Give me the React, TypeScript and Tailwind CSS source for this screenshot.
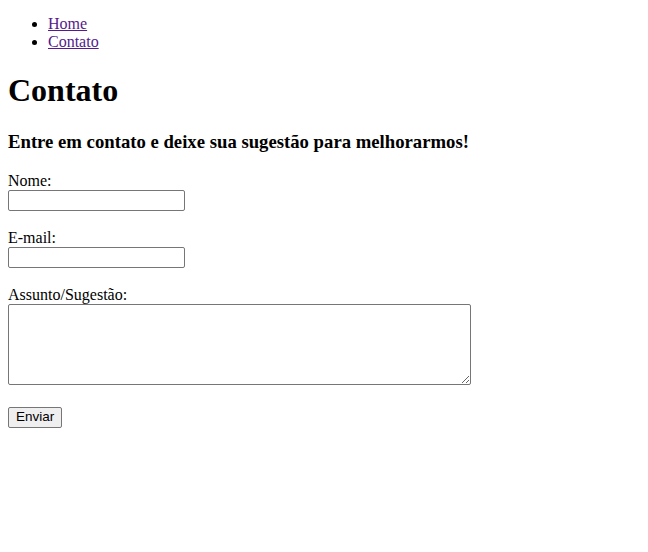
const App = () => {
  const field = 'block w-[177px] h-[21px] border border-[#767676] rounded-[2px] bg-white px-[2px] text-[13.33px]'

  return (
    <div className="min-h-screen bg-white p-2 text-base text-black leading-[normal] font-['Liberation_Serif','Times_New_Roman',serif]">
      <ul className="mt-[7px] mb-4 list-disc pl-10">
        <li>
          <a href="#" className="text-[#551a8b] underline">Home</a>
        </li>
        <li>
          <a href="#" className="text-[#551a8b] underline">Contato</a>
        </li>
      </ul>

      <h1 className="my-[21.44px] text-[32px] font-bold">Contato</h1>
      <h3 className="my-[18.72px] text-[18.72px] font-bold">
        Entre em contato e deixe sua sugestão para melhorarmos!
      </h3>

      <form onSubmit={(e) => e.preventDefault()}>
        <label htmlFor="nome" className="block">Nome:</label>
        <input id="nome" type="text" className={`${field} mb-[18px]`} />

        <label htmlFor="email" className="block">E-mail:</label>
        <input id="email" type="email" className={`${field} mb-[18px]`} />

        <label htmlFor="assunto" className="block">Assunto/Sugestão:</label>
        <textarea
          id="assunto"
          className="block w-[463px] h-[81px] mb-[22px] border border-[#767676] rounded-[2px] bg-white resize"
        />

        <button
          type="submit"
          className="block h-[21px] px-[7px] border border-[#767676] rounded-[2px] bg-[#efefef] text-[13.5px] leading-none font-['Liberation_Sans',Arial,sans-serif]"
        >
          Enviar
        </button>
      </form>
    </div>
  )
}

export default App
